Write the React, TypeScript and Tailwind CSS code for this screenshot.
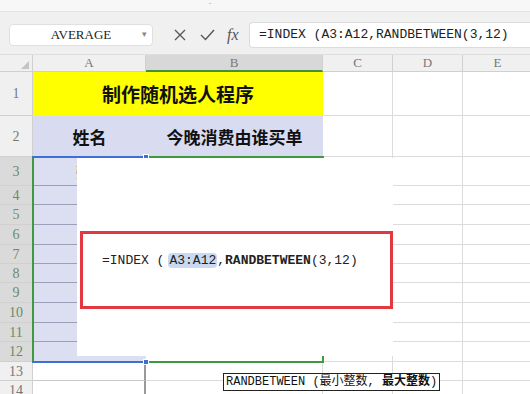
import React from "react"

const cols = [
    { key: "A", w: "w-[113px]" },
    { key: "B", w: "w-[177px]" },
    { key: "C", w: "w-[70px]" },
    { key: "D", w: "w-[70px]" },
    { key: "E", w: "w-[70px]" },
]

const rows = [
    { n: 3, h: "h-[29px]", name: "张三" },
    { n: 4, h: "h-[19px]", name: "" },
    { n: 5, h: "h-[20px]", name: "E" },
    { n: 6, h: "h-[20px]", name: "5" },
    { n: 7, h: "h-[19px]", name: "" },
    { n: 8, h: "h-[19px]", name: "" },
    { n: 9, h: "h-[20px]", name: "" },
    { n: 10, h: "h-[20px]", name: "" },
    { n: 11, h: "h-[19px]", name: "" },
    { n: 12, h: "h-[20px]", name: "" },
]

const mono = "font-['Liberation_Mono','Noto_Sans_CJK_SC',monospace]"
const cjk = "font-['Noto_Sans_CJK_SC','Liberation_Sans',sans-serif]"

function RowHead({ n, active }: { n: number; active?: boolean }) {
    return (
        <div
            className={`w-[33px] shrink-0 flex items-center justify-center border-r border-b border-[#d0d0d0] text-[14px] font-['Liberation_Serif',serif] ${
                active ? "bg-[#dadada] text-[#6b8a6b]" : "bg-[#f0f0f0] text-[#777]"
            }`}
        >
            {n}
        </div>
    )
}

function Cell({ w, className = "" }: { w: string; className?: string }) {
    return <div className={`${w} shrink-0 border-r border-b border-[#dcdcdc] ${className}`} />
}

export default function App() {
    return (
        <div className="relative w-[530px] h-[394px] overflow-hidden bg-white font-['Liberation_Sans',sans-serif]">
            {/* toolbar strip */}
            <div className="h-[12px] bg-[#f7f7f7] border-b border-[#e4e4e4] flex justify-center">
                <span className="ml-[-110px] text-[8px] leading-[12px] text-[#aaa]">ˇ</span>
            </div>

            {/* formula bar */}
            <div className="h-[43px] bg-[#f0f0f0] flex items-center pt-[4px] border-b border-[#dedede]">
                <div className="ml-[9px] w-[144px] h-[22px] bg-white rounded-[4px] border border-[#e0e0e0] flex items-center relative">
                    <span className="flex-1 text-center text-[13px] text-[#222] font-['Liberation_Serif',serif]">
                        AVERAGE
                    </span>
                    <span className="absolute right-[5px] top-[3px] text-[9px] text-[#888]">▾</span>
                </div>
                <div className="flex items-center ml-[19px] gap-[11px] text-[#555]">
                    <svg width="16" height="16" viewBox="0 0 16 16" fill="none" stroke="#555" strokeWidth="1.3">
                        <path d="M3 3 L13 13 M13 3 L3 13" />
                    </svg>
                    <svg width="17" height="16" viewBox="0 0 17 16" fill="none" stroke="#555" strokeWidth="1.4">
                        <path d="M2 8 L6.5 12.5 L15 3" />
                    </svg>
                    <span className="italic text-[16px] font-['Liberation_Serif',serif] text-[#555] w-[20px]">fx</span>
                </div>
                <div className="ml-[2px] flex-1 h-[26px] bg-white border-l border-y border-[#dcdcdc] rounded-l-[4px] flex items-center pl-[9px]">
                    <span className={`${mono} text-[13px] text-[#222] whitespace-nowrap`}>=INDEX (A3:A12,RANDBETWEEN(3,12)</span>
                </div>
            </div>

            {/* column headers */}
            <div className="flex h-[17px]">
                <div className="w-[33px] shrink-0 bg-[#f0f0f0] border-r border-b border-[#d0d0d0] flex items-end justify-end pr-[3px] pb-[2px]">
                    <div className="w-0 h-0 border-l-[8px] border-l-transparent border-b-[8px] border-b-[#c4c4c4]" />
                </div>
                {cols.map((c) => (
                    <div
                        key={c.key}
                        className={`${c.w} shrink-0 flex items-center justify-center text-[13px] font-['Liberation_Serif',serif] text-[#777] border-r ${
                            c.key === "B"
                                ? "bg-[#d8d8d8] border-b-2 border-b-[#3f8f3f] border-r-[#d0d0d0]"
                                : "bg-[#f0f0f0] border-b border-[#d0d0d0]"
                        }`}
                    >
                        {c.key}
                    </div>
                ))}
            </div>

            {/* row 1 */}
            <div className="flex h-[44px]">
                <RowHead n={1} />
                <div className={`w-[290px] shrink-0 bg-[#ffff00] flex items-center justify-center ${cjk} font-bold text-[19px] text-[#111]`}>
                    制作随机选人程序
                </div>
                <Cell w="w-[70px]" />
                <Cell w="w-[70px]" />
                <Cell w="w-[70px]" />
            </div>

            {/* row 2 */}
            <div className="flex h-[41px]">
                <RowHead n={2} />
                <div className={`w-[113px] shrink-0 bg-[#d9dcf0] flex items-center justify-center ${cjk} font-bold text-[17px] text-[#111]`}>
                    姓名
                </div>
                <div className={`w-[177px] shrink-0 bg-[#d9dcf0] flex items-center justify-center ${cjk} font-bold text-[17px] text-[#111]`}>
                    今晚消费由谁买单
                </div>
                <Cell w="w-[70px]" />
                <Cell w="w-[70px]" />
                <Cell w="w-[70px]" />
            </div>

            {/* rows 3-12 */}
            {rows.map((r) => (
                <div key={r.n} className={`flex ${r.h}`}>
                    <RowHead n={r.n} active />
                    <div className={`w-[113px] shrink-0 bg-[#dcdff2] border-b border-[#9aa0b8] flex items-center justify-center ${cjk} text-[14px] text-[#222]`}>
                        {r.name}
                    </div>
                    <Cell w="w-[177px]" />
                    <Cell w="w-[70px]" />
                    <Cell w="w-[70px]" />
                    <Cell w="w-[70px]" />
                </div>
            ))}

            {/* rows 13-14 */}
            {[13, 14].map((n) => (
                <div key={n} className="flex h-[19px]">
                    <RowHead n={n} />
                    <div className="w-[113px] shrink-0 border-b border-r-2 border-b-[#c8c8c8] border-r-[#9a9a9a]" />
                    <Cell w="w-[177px]" />
                    <Cell w="w-[70px]" />
                    <Cell w="w-[70px]" />
                    <Cell w="w-[70px]" />
                </div>
            ))}

            {/* selection outline A3:B12 */}
            <div className="absolute left-[32px] top-[156px] w-[292px] h-[207px] border-2 border-[#3f9a3f] pointer-events-none" />
            <div className="absolute left-[32px] top-[156px] w-[114px] h-[2px] bg-[#3f6fd0]" />
            <div className="absolute left-[32px] top-[361px] w-[114px] h-[2px] bg-[#3f6fd0]" />
            <div className="absolute left-[143px] top-[154px] w-[6px] h-[6px] bg-[#3f6fd0] border border-white" />
            <div className="absolute left-[143px] top-[359px] w-[6px] h-[6px] bg-[#3f6fd0] border border-white" />

            {/* editing popup */}
            <div className="absolute left-[77px] top-[158px] w-[316px] h-[198px] bg-white">
                <div className="absolute left-[3px] top-[73px] w-[313px] h-[78px] border-[3px] border-[#e2383f] flex items-center pl-[19px]">
                    <span className={`${mono} text-[13px] text-[#222] whitespace-nowrap -mt-[18px]`}>
                        =INDEX (<span className="bg-[#c9d9f2] rounded-[4px] px-[1px] ml-[4px]">A3:A12</span>,<span className="font-bold">RANDBETWEEN</span>(3,12)
                    </span>
                </div>
            </div>

            {/* argument tooltip */}
            <div className="absolute left-[223px] top-[373px] h-[18px] px-[2px] bg-white border border-[#222] flex items-center">
                <span className={`${mono} text-[12px] text-[#111] whitespace-nowrap`}>
                    RANDBETWEEN (最小整数, <span className="font-bold">最大整数</span>)
                </span>
            </div>
        </div>
    )
}
